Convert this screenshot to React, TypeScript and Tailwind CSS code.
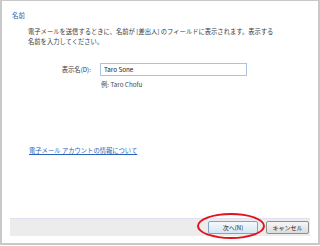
import React from "react";

const jp = { fontFamily: '"Noto Sans CJK JP", "Noto Sans", sans-serif' };

export default function App() {
  return (
    <div className="w-[320px] h-[246px] bg-white" style={jp}>
      <div className="w-[320px] h-[245px] border-2 border-t border-[#c9c9c9] flex flex-col relative">
        <div className="pl-[10px] pt-[10px] text-[6.5px] leading-[9px] text-[#1f5fa8]">名前</div>
        <div className="pl-[26px] pt-[7px] text-[6.3px] leading-[10px] text-[#3a3a3a]">
          <div>電子メールを送信するときに、名前が [差出人] のフィールドに表示されます。表示する</div>
          <div>名前を入力してください。</div>
        </div>
        <div className="flex items-center mt-[16px]">
          <div className="w-[89px] text-right text-[6.3px] text-[#3a3a3a]">表示名(D):</div>
          <div className="ml-[9px] w-[147px] h-[13px] border border-[#a9c3e0] flex items-center pl-[3px] text-[6.3px] text-[#222]">
            Taro Sone
          </div>
        </div>
        <div className="pl-[99px] pt-[4px] text-[6.3px] text-[#4a4a4a]">例: Taro Chofu</div>
        <div className="pl-[27px] mt-[57px] text-[6.3px] text-[#2a64b8] underline">電子メール アカウントの情報について</div>
        <div className="flex-1" />
        <div className="mx-[8px] mb-[7px] h-[18px] bg-[#ececec] border-t border-[#e2dff0] flex items-center justify-end gap-[8px] pr-[1px]">
          <div className="relative">
            <div className="w-[50px] h-[13px] border border-[#7fa4c8] rounded-[2px] bg-gradient-to-b from-[#f4f9fd] to-[#d6e6f3] flex items-center justify-center text-[6px] text-[#222]">
              次へ(N)
            </div>
            <div className="absolute left-[-11px] top-[-8px] w-[68px] h-[26px] rounded-[50%] border-2 border-[#e0141e]" />
          </div>
          <div className="w-[43px] h-[13px] border border-[#8e8e8e] rounded-[2px] bg-gradient-to-b from-[#f6f6f6] to-[#dcdcdc] flex items-center justify-center text-[6px] text-[#222]">
            キャンセル
          </div>
        </div>
      </div>
    </div>
  );
}
